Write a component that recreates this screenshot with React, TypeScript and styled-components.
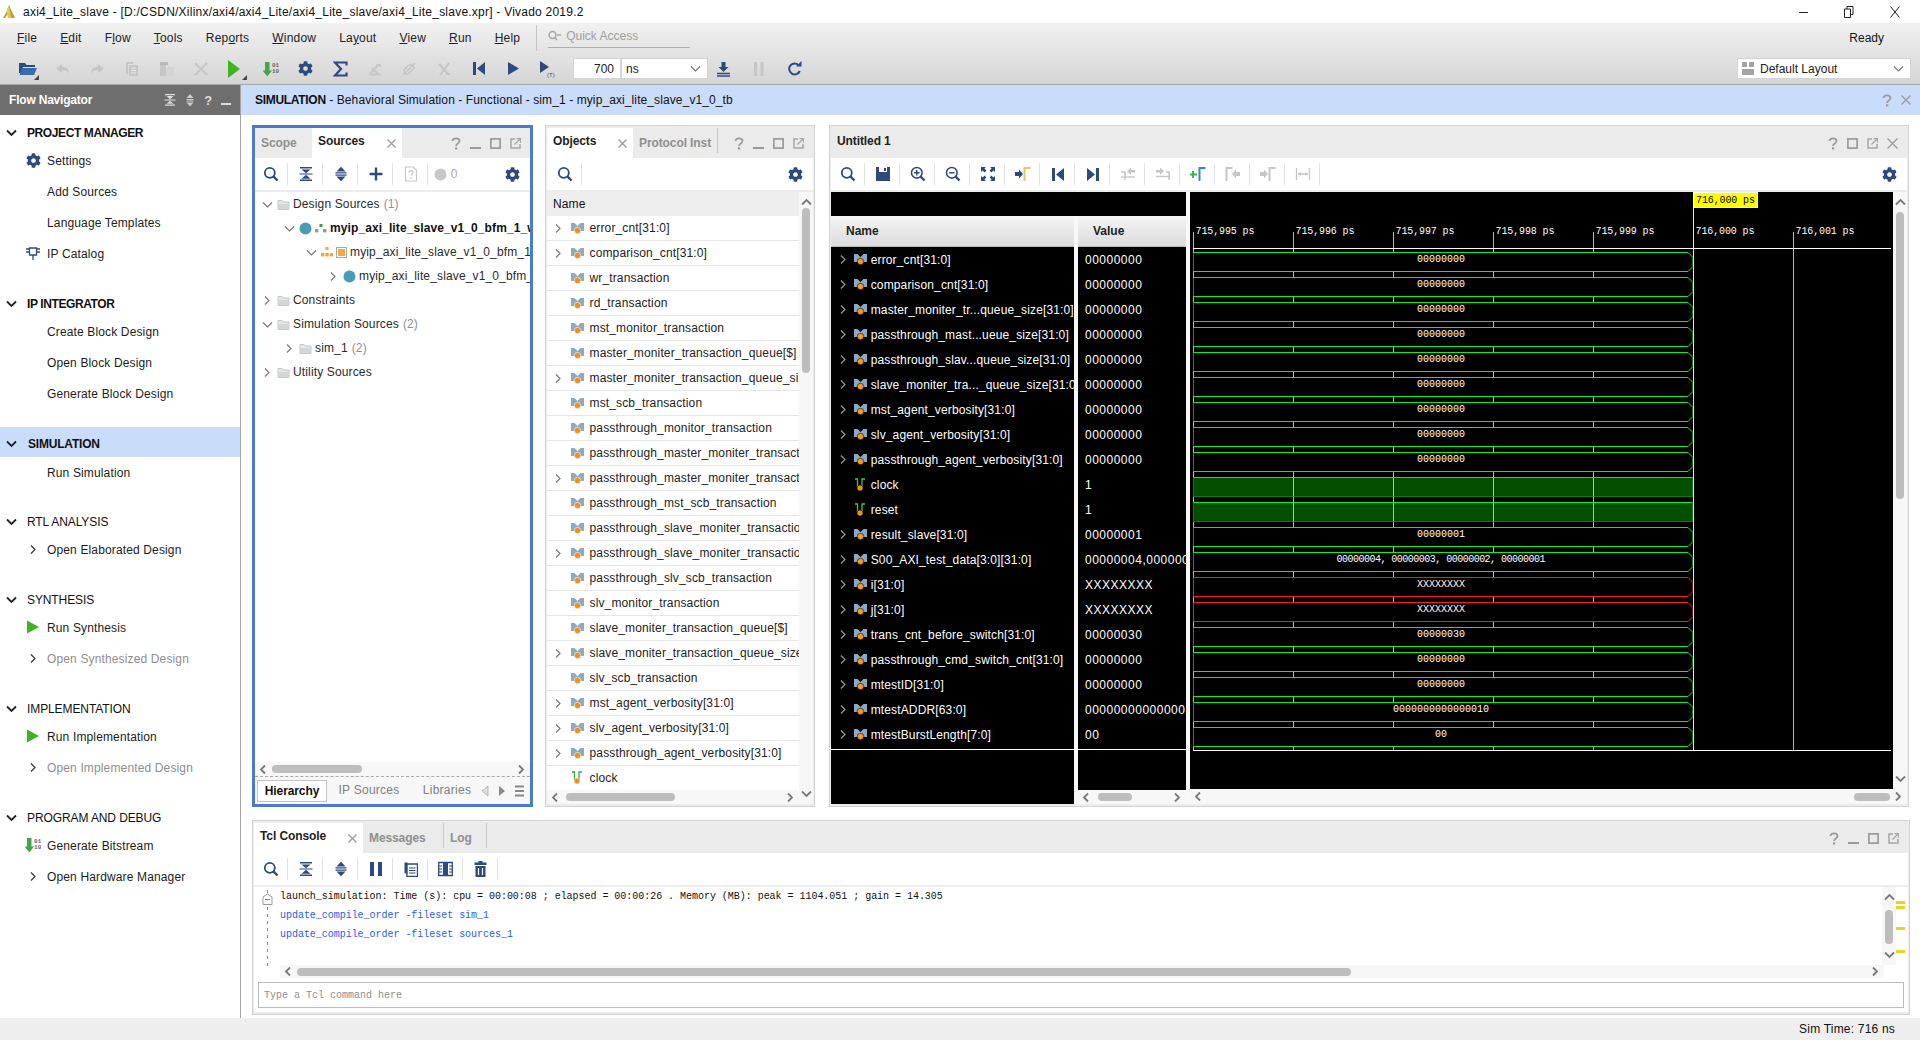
import React from 'react';
import styled, { createGlobalStyle } from 'styled-components';
import { FaCog } from 'react-icons/fa';

const navy = '#2c4a7e';
const dim = '#c6c6c6';
const UI = '"Liberation Sans", Arial, sans-serif';
const MONO = '"Liberation Mono", monospace';

const Global = createGlobalStyle`
  html, body { margin: 0; padding: 0; background: #fff; }
  * { box-sizing: border-box; }
  body { font: 12px ${UI}; color: #111; }
`;

const Page = styled.div`
  width: 1920px;
  height: 1040px;
  display: flex;
  flex-direction: column;
  overflow: hidden;
`;

/* ---------- title + menus ---------- */
const TitleBar = styled.div`
  height: 23px;
  display: flex;
  align-items: center;
  padding-left: 3px;
  gap: 8px;
  background: #fff;
`;
const TitleText = styled.span`
  font-size: 12px;
  letter-spacing: 0.23px;
`;
const WindowButtons = styled.div`
  margin-left: auto;
  display: flex;
  align-items: center;
  gap: 36px;
  padding-right: 20px;
`;
const Chrome = styled.div`
  height: 62px;
  background: linear-gradient(#f1f1f1, #d5d5d5);
  border-bottom: 1px solid #a6a6a6;
`;
const MenuRow = styled.div`
  height: 30px;
  display: flex;
  align-items: center;
  padding-left: 17px;
  gap: 23px;
`;
const MenuItem = styled.span`
  font-size: 12px;
  color: #222;
  letter-spacing: 0.2px;
  u { text-underline-offset: 1px; }
`;
const QuickAccess = styled.div`
  margin-left: -7px;
  height: 26px;
  border-left: 1px solid #c4c4c4;
  padding-left: 11px;
`;
const QuickField = styled.div`
  width: 142px;
  height: 23px;
  border-bottom: 1px solid #aeaeae;
  color: #a0a0a0;
  display: flex;
  gap: 5px;
  align-items: center;
  font-size: 12px;
`;
const ReadyText = styled.span`
  margin-left: auto;
  padding-right: 36px;
`;
const MainTools = styled.div`
  height: 31px;
  display: flex;
  align-items: center;
  padding-left: 10.5px;
`;
const MainSlot = styled.div`
  width: 34.7px;
  display: flex;
  justify-content: center;
  align-items: center;
`;
const TimeInput = styled.input`
  width: 48px;
  height: 21px;
  margin-left: 7.5px;
  border: 1px solid #d4d4d4;
  background: #fff;
  font: 12px ${UI};
  text-align: right;
  padding: 0 6px 0 0;
  color: #222;
  outline: none;
`;
const SelectBox = styled.div<{ $w: number }>`
  width: ${p => p.$w}px;
  height: 21px;
  display: flex;
  align-items: center;
  background: #fff;
  border: 1px solid #d4d4d4;
  padding: 0 6px 0 4px;
  gap: 6px;
  font-size: 12px;
  color: #222;
  svg:last-child { margin-left: auto; }
`;
const TailTools = styled.div`
  display: flex;
  margin-left: 8px;
  gap: 23px;
`;
const LayoutPick = styled.div`
  margin-left: auto;
  padding-right: 9px;
`;

/* ---------- body ---------- */
const Body = styled.div`
  flex: 1;
  display: flex;
  min-height: 0;
`;
const Sidebar = styled.nav`
  width: 241px;
  border-right: 1px solid #a4a4a4;
  display: flex;
  flex-direction: column;
`;
const NavHead = styled.div`
  height: 30px;
  background: #6e6e6e;
  color: #fff;
  font-weight: bold;
  font-size: 12px;
  display: flex;
  align-items: center;
  padding: 0 9px;
  letter-spacing: -0.2px;
`;
const NavHeadTools = styled.div`
  margin-left: auto;
  display: flex;
  align-items: center;
  gap: 9px;
  color: #ddd;
  font-size: 13px;
`;
const NavList = styled.div`
  padding-top: 2px;
  display: flex;
  flex-direction: column;
  gap: 19px;
`;
const NavGroup = styled.div<{ $tight?: boolean }>`
  margin-bottom: ${p => (p.$tight ? -1 : 0)}px;
`;
const Heading = styled.div<{ $active?: boolean; $strong?: boolean }>`
  height: ${p => (p.$active ? 30 : 28)}px;
  margin-top: ${p => (p.$active ? -1 : 0)}px;
  display: flex;
  align-items: center;
  background: ${p => (p.$active ? '#c9ddfb' : 'transparent')};
  font-weight: ${p => (p.$strong || p.$active ? 'bold' : 'normal')};
  letter-spacing: ${p => (p.$strong ? -0.4 : p.$active ? -0.2 : -0.1)}px;
  color: #111;
  padding-left: 6px;
  gap: ${p => (p.$active ? 11 : 10)}px;
  padding-top: 3px;
`;
const NavItem = styled.div<{ $off?: boolean }>`
  height: 31px;
  display: flex;
  align-items: center;
  color: ${p => (p.$off ? '#8e8e8e' : '#1c1c1c')};
  letter-spacing: 0.14px;
  padding-left: 47px;
  position: relative;
`;
const NavMark = styled.span`
  position: absolute;
  left: 24px;
  top: 6px;
  width: 18px;
  height: 18px;
  display: flex;
  align-items: center;
  justify-content: center;
`;
const Main = styled.main`
  flex: 1;
  min-width: 0;
  display: flex;
  flex-direction: column;
`;
const Banner = styled.div`
  height: 30px;
  background: #c9ddfb;
  display: flex;
  align-items: center;
  padding: 0 9px 0 14px;
  font-size: 12px;
  letter-spacing: 0.1px;
  b { letter-spacing: -0.3px; }
`;
const BannerTools = styled.div`
  margin-left: auto;
  display: flex;
  gap: 9px;
  align-items: center;
`;
const Workspace = styled.div`
  display: flex;
  height: 682px;
  margin: 10px 0 13px 11px;
  gap: 12px;
`;
const Panel = styled.section<{ $w?: number; $active?: boolean }>`
  width: ${p => (p.$w ? `${p.$w}px` : 'auto')};
  display: flex;
  flex-direction: column;
  border: ${p => (p.$active ? '3px solid #4a7bcf' : '1px solid #d2d2d2')};
  padding: ${p => (p.$active ? '0' : '2px 1px')};
  background: ${p => (p.$active ? '#fff' : '#ececec')};
  min-height: 0;
`;
const WavePanel = styled(Panel)`
  margin-left: 2px;
`;
const ConsolePanel = styled(Panel)`
  height: 195px;
  margin-left: 11px;
  width: 1658px;
`;

const TabStrip = styled.div`
  height: 30px;
  flex: none;
  display: flex;
  background: #ebebeb;
`;
const Tab = styled.div<{ $w: number; $active?: boolean; $sep?: boolean; $title?: boolean }>`
  width: ${p => p.$w}px;
  display: flex;
  align-items: center;
  padding: 0 6px;
  font-weight: bold;
  white-space: nowrap;
  color: ${p => (p.$active ? '#222' : '#8f8f8f')};
  background: ${p => (p.$active && !p.$title ? '#fff' : 'transparent')};
  border-right: ${p => (p.$sep ? '1px solid #c8c8c8' : '0')};
  margin: ${p => (p.$sep ? '0 0 5px' : '0')};
  letter-spacing: -0.1px;
  padding-top: ${p => (p.$sep ? 5 : 0)}px;
  padding-bottom: ${p => (p.$active ? 5 : 0)}px;
  svg { margin-left: auto; margin-top: 5px; }
`;
const PanelTools = styled.div`
  margin-left: auto;
  display: flex;
  align-items: center;
  padding-right: 7px;
  gap: 5px;
`;
const ControlSlot = styled.span`
  width: 15px;
  height: 15px;
  display: flex;
  align-items: center;
  justify-content: center;
`;
const Toolbar = styled.div<{ $pull?: number }>`
  height: 34px;
  flex: none;
  display: flex;
  background: #fff;
  border-bottom: 2px solid #ececec;
  padding-left: ${p => 2 - (p.$pull ?? 0)}px;
  & > div:first-child { margin-left: -2px; }
`;
const ToolSlot = styled.div<{ $sep?: boolean }>`
  width: 35px;
  height: 32px;
  display: flex;
  align-items: center;
  justify-content: center;
  position: relative;
  &::after {
    content: '';
    display: ${p => (p.$sep === false ? 'none' : 'block')};
    position: absolute;
    right: 0;
    top: 5px;
    height: 22px;
    width: 1px;
    background: #e2e2e2;
  }
`;
const ToolEnd = styled.div`
  margin-left: auto;
  width: 35px;
  display: flex;
  align-items: center;
  justify-content: center;
`;
const Count = styled.span`
  color: #aaa;
  font-size: 12px;
  margin-left: 4px;
`;

/* ---------- scrollbars ---------- */
const HBar = styled.div<{ $h?: number; $inset?: number; $end?: number }>`
  height: ${p => p.$h ?? 14}px;
  flex: none;
  display: flex;
  align-items: center;
  background: #f7f7f7;
  padding: 0 3px;
  margin-left: ${p => p.$inset ?? 0}px;
  margin-right: ${p => p.$end ?? 0}px;
`;
const HTrack = styled.div`
  flex: 1;
  display: flex;
  min-width: 0;
`;
const HThumb = styled.div<{ $from: number; $len: number }>`
  margin-left: ${p => p.$from}px;
  width: ${p => p.$len}px;
  height: 8px;
  border-radius: 4px;
  background: #bdbdbd;
`;
const VBar = styled.div<{ $w?: number }>`
  width: ${p => p.$w ?? 14}px;
  flex: none;
  display: flex;
  flex-direction: column;
  align-items: center;
  background: #f7f7f7;
  padding: 5px 0;
`;
const VTrack = styled.div`
  flex: 1;
  display: flex;
  flex-direction: column;
  align-items: center;
  min-height: 0;
`;
const VThumb = styled.div<{ $from: number; $len: number }>`
  margin-top: ${p => p.$from}px;
  height: ${p => p.$len}px;
  width: 8px;
  border-radius: 4px;
  background: #bdbdbd;
`;

/* ---------- sources ---------- */
const Tree = styled.div`
  flex: 1;
  overflow: hidden;
  min-height: 0;
  background: #fff;
`;
const TreeRow = styled.div<{ $depth: number }>`
  height: 24px;
  display: flex;
  align-items: center;
  padding-left: ${p => 5 + p.$depth * 22}px;
  white-space: nowrap;
  color: #2a2a2a;
  gap: 3px;
  letter-spacing: 0.14px;
`;
const TreeBold = styled.b`
  color: #111;
  letter-spacing: 0.1px;
`;
const Muted = styled.span`
  color: #8f8f8f;
  margin-left: 1px;
`;
const ChevronBox = styled.span`
  width: 14px;
  flex: none;
  display: flex;
  justify-content: center;
`;
const BottomTabs = styled.div`
  height: 28px;
  flex: none;
  border-top: 1px dashed #a8a8a8;
  display: flex;
  align-items: center;
  padding-left: 2px;
  background: #f7f7f7;
  color: #808080;
`;
const BottomTab = styled.div<{ $active?: boolean; $w: number }>`
  width: ${p => p.$w}px;
  height: 22px;
  text-align: center;
  line-height: 20px;
  background: ${p => (p.$active ? '#fff' : 'transparent')};
  border: ${p => (p.$active ? '1px solid #c4c4c4' : '0')};
  font-weight: ${p => (p.$active ? 'bold' : 'normal')};
  color: ${p => (p.$active ? '#111' : '#808080')};
  letter-spacing: ${p => (p.$active ? -0.1 : 0.25)}px;
`;
const BottomArrows = styled.div`
  display: flex;
  align-items: center;
  gap: 9px;
  margin-left: -2px;
`;

/* ---------- objects ---------- */
const ObjectsBody = styled.div`
  flex: 1;
  min-height: 0;
  display: flex;
  background: #fff;
`;
const ObjectsList = styled.div`
  flex: 1;
  min-width: 0;
  display: flex;
  flex-direction: column;
`;
const ObjectsHead = styled.div`
  height: 24px;
  flex: none;
  background: #eeeeee;
  padding: 0 6px;
  display: flex;
  align-items: center;
  letter-spacing: 0.1px;
`;
const ObjectsRows = styled.div`
  flex: 1;
  overflow: hidden;
`;
const ObjectRow = styled.div`
  height: 25px;
  display: flex;
  align-items: center;
  padding-left: 2px;
  border-bottom: 1px solid #e6e6e6;
  white-space: nowrap;
  overflow: hidden;
  letter-spacing: 0.14px;
  color: #222;
`;
const ChevronSlot = styled.span`
  width: 19px;
  flex: none;
  display: flex;
  justify-content: center;
`;
const SignalSlot = styled.span<{ $w: number; $pad: number }>`
  width: ${p => p.$w}px;
  padding-left: ${p => p.$pad}px;
  flex: none;
  display: flex;
  align-items: center;
`;

/* ---------- wave ---------- */
const WaveBody = styled.div`
  flex: 1;
  min-height: 0;
  display: flex;
  gap: 4px;
  background: #f8f8f8;
`;
const SignalBlock = styled.div`
  width: 355px;
  flex: none;
  display: flex;
  flex-direction: column;
`;
const BlackStrip = styled.div`
  height: 24px;
  flex: none;
  background: #000;
`;
const SignalColumns = styled.div`
  flex: 1;
  display: flex;
  gap: 4px;
  min-height: 0;
`;
const SignalColumn = styled.div<{ $w: number }>`
  width: ${p => p.$w}px;
  flex: none;
  display: flex;
  flex-direction: column;
  background: #000;
`;
const ColumnHead = styled.div<{ $pad: number }>`
  height: 31px;
  flex: none;
  background: linear-gradient(#f5f5f5, #dcdcdc);
  border-bottom: 1px solid #bbb;
  display: flex;
  align-items: center;
  padding-left: ${p => p.$pad}px;
  font-weight: bold;
  color: #222;
`;
const SignalRows = styled.div`
  height: 503px;
  flex: none;
  border-bottom: 1px solid #fff;
  overflow: hidden;
`;
const BlackFill = styled.div`
  flex: 1;
  background: #000;
`;
const NameRow = styled.div`
  height: 25px;
  display: flex;
  align-items: center;
  padding-left: 3px;
  color: #fff;
  white-space: nowrap;
  overflow: hidden;
  letter-spacing: 0.14px;
`;
const ValueRow = styled.div`
  height: 25px;
  display: flex;
  align-items: center;
  padding-left: 7px;
  color: #fff;
  white-space: nowrap;
  overflow: hidden;
  letter-spacing: 0.5px;
`;
const WaveArea = styled.div`
  flex: 1;
  min-width: 0;
  display: flex;
  flex-direction: column;
`;
const WaveTop = styled.div`
  height: 597px;
  flex: none;
  display: flex;
`;
const WaveSvg = styled.svg`
  display: block;
  flex: none;
  background: #000;
`;

/* ---------- console ---------- */
const ConsoleBody = styled.div`
  flex: 1;
  min-height: 0;
  display: flex;
  flex-direction: column;
  background: #fff;
`;
const ConsoleTop = styled.div`
  height: 78px;
  flex: none;
  display: flex;
`;
const FoldGutter = styled.div`
  width: 26px;
  flex: none;
  padding-left: 8px;
  padding-top: 3px;
`;
const ConsoleLines = styled.div`
  flex: 1;
  min-width: 0;
  font: 10px ${MONO};
`;
const ConsoleLine = styled.div<{ $cmd?: boolean }>`
  height: 19px;
  line-height: 19px;
  white-space: nowrap;
  color: ${p => (p.$cmd ? '#1f5cf0' : '#111')};
  letter-spacing: -0.03px;
`;
const MarkColumn = styled.div`
  width: 9px;
  flex: none;
  margin-right: 3px;
`;
const Mark = styled.div<{ $top: number }>`
  height: 3px;
  margin-top: ${p => p.$top}px;
  background: #e8d320;
`;
const ConsoleInput = styled.input`
  display: block;
  height: 26px;
  margin: 4px 4px 0 4px;
  width: calc(100% - 8px);
  border: 1px solid #bcbcbc;
  background: #fff;
  font: 10px ${MONO};
  padding: 0 5px;
  outline: none;
  &::placeholder { color: #8e8e8e; opacity: 1; }
`;
const StatusBar = styled.footer`
  height: 22px;
  flex: none;
  background: #eeeeee;
  display: flex;
  align-items: center;
  justify-content: flex-end;
  padding-right: 25px;
  letter-spacing: 0.2px;
`;

/* ---------- icons ---------- */
const S = ({ w = 16, h = 16, children, box }: { w?: number; h?: number; children: React.ReactNode; box?: string }) => (
  <svg width={w} height={h} viewBox={box ?? `0 0 ${w} ${h}`} style={{ flex: 'none', display: 'block' }}>
    {children}
  </svg>
);
const Chevron = ({ dir = 'right', color = '#7a7a7a', bold = false }: { dir?: 'right' | 'down' | 'left' | 'up'; color?: string; bold?: boolean }) => {
  const d = { right: 'M3 1.5 L7 5.5 L3 9.5', left: 'M7 1.5 L3 5.5 L7 9.5', down: 'M1 3.5 L5.5 8 L10 3.5', up: 'M1 7.5 L5.5 3 L10 7.5' }[dir];
  return (
    <S w={11} h={11}>
      <path d={d} fill="none" stroke={color} strokeWidth={bold ? 1.8 : 1.2} />
    </S>
  );
};
const Search = ({ c = navy }: { c?: string }) => (
  <S>
    <circle cx="6.8" cy="6.8" r="5" fill="none" stroke={c} strokeWidth="1.8" />
    <path d="M10.4 10.4 L14.5 14.5" stroke={c} strokeWidth="2.4" />
  </S>
);
const QuickGlass = () => (
  <S w={13} h={12}>
    <circle cx="4.5" cy="5" r="3.4" fill="none" stroke="#a6a6a6" strokeWidth="1.5" />
    <path d="M7 7.5L9 10M9 5h4" stroke="#a6a6a6" strokeWidth="1.5" />
  </S>
);
const CollapseAll = () => (
  <S>
    <path d="M2 1h12v1.4H2z M3.5 3.4h9L8 7.3z M1.5 7.4h13v1.2h-13z M8 8.8l4.5 4h-9z M2 13.6h12V15H2z" fill={navy} />
  </S>
);
const ExpandAll = () => (
  <S>
    <path d="M8 .8l4.5 4.6h-9z M2.5 6.2h11v1.2h-11z M2.5 8.6h11v1.2h-11z M3.5 10.6h9L8 15.2z" fill={navy} />
  </S>
);
const Plus = () => (
  <S>
    <path d="M6.8 1.5h2.4v5.3h5.3v2.4H9.2v5.3H6.8V9.2H1.5V6.8h5.3z" fill={navy} />
  </S>
);
const Gear = () => <FaCog size={15} color={navy} />;
const DocHelp = () => (
  <S>
    <path d="M2.5 1h8l3 3v11h-11z" fill="none" stroke={dim} strokeWidth="1.2" />
    <path d="M6 6.5c0-2.5 4-2.5 4 0 0 1.5-2 1.5-2 3.2M8 11v1.4" fill="none" stroke={dim} strokeWidth="1.2" />
  </S>
);
const Help = () => (
  <S w={10} h={13}>
    <path d="M1.5 4c0-3.6 7-3.6 7 0 0 2.4-3.4 2.4-3.4 5" fill="none" stroke="#9a9a9a" strokeWidth="1.8" />
    <rect x="4" y="10.3" width="2.2" height="2.2" fill="#9a9a9a" />
  </S>
);
const Minimize = () => (
  <S w={11} h={13}>
    <rect x="0" y="10" width="11" height="2" fill="#9a9a9a" />
  </S>
);
const Maximize = () => (
  <S w={11} h={11}>
    <rect x=".9" y=".9" width="9.2" height="9.2" fill="none" stroke="#9a9a9a" strokeWidth="1.7" />
  </S>
);
const Float = () => (
  <S w={11} h={11}>
    <path d="M5 1H1v9h9V6" fill="none" stroke="#a6a6a6" strokeWidth="1.5" />
    <path d="M4.5 6.5 L10.5 .5 M6.5 .7h4v4" fill="none" stroke="#a6a6a6" strokeWidth="1.3" />
  </S>
);
const CloseX = ({ c = '#9a9a9a', s = 9 }: { c?: string; s?: number }) => (
  <S w={s} h={s}>
    <path d={`M.5 .5L${s - 0.5} ${s - 0.5}M${s - 0.5} .5L.5 ${s - 0.5}`} stroke={c} strokeWidth="1.3" />
  </S>
);
const FolderGray = () => (
  <S w={13} h={13}>
    <path d="M1 2.5h4l1 1.5h6v7.5H1z" fill="#e4e6e8" stroke="#c4c7ca" strokeWidth="1" />
    <path d="M1.5 6h10.5v5H1.5z" fill="#d4d7da" />
  </S>
);
const Dot = ({ c = '#4a9bb8' }: { c?: string }) => (
  <S w={13} h={13}>
    <circle cx="6.5" cy="6.5" r="6" fill={c} />
  </S>
);
const Hier = ({ warm = false }: { warm?: boolean }) => (
  <S w={12} h={12}>
    <rect x="4.5" y={warm ? 1 : 2} width="3" height="3" fill={warm ? '#f2a63c' : '#3ba043'} />
    <rect x="0" y="7" width="3.4" height="3.4" fill={warm ? '#f2a63c' : '#9a9a9a'} />
    <rect x={warm ? 4.4 : 8} y="7" width="3.4" height="3.4" fill={warm ? '#f2a63c' : '#9a9a9a'} />
    {warm && <rect x="8.8" y="7" width="3.2" height="3.4" fill="#f2a63c" />}
  </S>
);
const OrangeBox = () => (
  <S w={11} h={11}>
    <rect x=".5" y=".5" width="10" height="10" fill="#fff" stroke="#aaa" />
    <rect x="2" y="2" width="7" height="7" fill="#f6a83e" />
  </S>
);
const Signal = ({ dark = false }: { dark?: boolean }) => (
  <S w={13} h={13}>
    <path d="M0 1h3.5L6.5 4l3-3H13v8H0z" fill={dark ? '#8aa9c4' : '#8fa9bf'} />
    <circle cx="6.5" cy="8.5" r="3.2" fill={dark ? '#f79a22' : '#ef8f1e'} stroke={dark ? '#000' : '#fff'} strokeWidth=".6" />
  </S>
);
const ClockSignal = ({ dark = false }: { dark?: boolean }) => (
  <S w={13} h={14}>
    <path d="M1 1h2.5v8M8 9V1h3" fill="none" stroke={dark ? '#4bc24b' : '#3aa34a'} strokeWidth="1.3" />
    <circle cx="6" cy="10" r="3" fill="#ef8f1e" stroke={dark ? '#000' : '#fff'} strokeWidth=".5" />
  </S>
);
const RunTriangle = ({ s = 12 }: { s?: number }) => (
  <S w={s} h={s + 2} box="0 0 12 14">
    <path d="M0 .5 L12 7 L0 13.5z" fill="#3fb41f" />
  </S>
);
const BitStream = () => (
  <S w={16} h={16}>
    <path d="M2 1h4.5v8.5H9l-4.7 6-4.6-6H2z" fill="#3fa64a" />
    <text x="9" y="6.4" fontFamily={MONO} fontSize="6" fontWeight="bold" fill="#666">01</text>
    <text x="9" y="12.4" fontFamily={MONO} fontSize="6" fontWeight="bold" fill="#666">10</text>
  </S>
);
const Corner = () => (
  <path d="M22 22h-5l5-5z" fill="#444" />
);
const FolderOpen = () => (
  <S w={22} h={22}>
    <path d="M2 5h6l1.5 2H18v2H6l-2 6H2z" fill={navy} />
    <path d="M5 10h15l-3 7H2.5z" fill="#3a6bb0" />
    <Corner />
  </S>
);
const UndoIcon = ({ flip = false }: { flip?: boolean }) => (
  <S w={16} h={12}>
    <g transform={flip ? 'translate(16 0) scale(-1 1)' : undefined}>
      <path d="M7 1 L1 5.5 L7 10 V7.2 C10 7 12.5 8 14.5 10.5 C14 6 11 3.8 7 3.8z" fill={dim} />
    </g>
  </S>
);
const CopyIcon = () => (
  <S w={14} h={16}>
    <path d="M1 1h7v2H3v10H1z" fill={dim} />
    <path d="M4 4h9v11H4z" fill={dim} />
    <path d="M6 7h5M6 9.5h5M6 12h5" stroke="#eaeaea" />
  </S>
);
const PasteIcon = () => (
  <S w={16} h={16}>
    <path d="M1 1h8v3H1z" fill="#b8b8b8" />
    <path d="M1 4h6v11H1z" fill={dim} />
    <path d="M7.5 6H15v9H7.5z" fill="#d4d4d4" />
  </S>
);
const BigX = () => (
  <S w={14} h={14}>
    <path d="M1 1L13 13M13 1L1 13" stroke={dim} strokeWidth="2" />
  </S>
);
const RunMain = () => (
  <S w={22} h={22}>
    <path d="M3 2 L15 11 L3 20z" fill="#3fb41f" />
    <Corner />
  </S>
);
const Sigma = () => (
  <S w={15} h={16}>
    <path d="M13.5 4.5V1.5H2l6 6.5-6 6.5h11.5v-3" fill="none" stroke={navy} strokeWidth="2.2" />
  </S>
);
const CheckOff = () => (
  <S>
    <path d="M2 13.5h12M3 13L12 3M5 7l6 6M9 4h4v2" fill="none" stroke={dim} strokeWidth="2" />
  </S>
);
const SlashOff = () => (
  <S>
    <path d="M2 14L14 2M3 9l5-5 4 0 1 3-6 6H4z" fill="none" stroke={dim} strokeWidth="1.5" />
  </S>
);
const CrossOff = () => (
  <S>
    <path d="M3 3l9 10M13 2L4 14M10 13h4" fill="none" stroke={dim} strokeWidth="2" />
  </S>
);
const SkipStart = () => (
  <S w={14} h={15}>
    <path d="M1 1h3v13H1z M13 1v13L5 7.5z" fill={navy} />
  </S>
);
const SkipEnd = () => (
  <S w={14} h={15}>
    <path d="M10 1h3v13h-3z M1 1v13l8-6.5z" fill={navy} />
  </S>
);
const Play = () => (
  <S w={13} h={15}>
    <path d="M1 1 L12 7.5 L1 14z" fill={navy} />
  </S>
);
const PlayT = () => (
  <S w={18} h={18}>
    <path d="M1 1 L10 7 L1 13z" fill={navy} />
    <text x="8" y="17" fontFamily={UI} fontSize="6" fill={navy}>(T)</text>
  </S>
);
const StepDown = () => (
  <S w={15} h={16}>
    <path d="M5.5 1h4v5h3L7.5 11 2.5 6h3z" fill={navy} />
    <path d="M1 12.5h13M1 15h13" stroke={navy} strokeWidth="1.3" />
  </S>
);
const PauseOff = () => (
  <S w={10} h={16}>
    <path d="M0 1h3.2v14H0z M6.4 1h3.2v14H6.4z" fill={dim} />
  </S>
);
const Reload = () => (
  <S w={15} h={15}>
    <path d="M12 4.5A5.5 5.5 0 1 0 12.8 10" fill="none" stroke={navy} strokeWidth="2" />
    <path d="M9 5.5h5.5V0z" fill={navy} />
  </S>
);
const LayoutIcon = () => (
  <S w={12} h={13}>
    <path d="M0 0h5v5H0z M7 0h5v5H7z M0 7h12v6H0z" fill="#a4a4a4" />
  </S>
);
const Save = () => (
  <S>
    <path d="M1 1h14v14H1z" fill={navy} />
    <path d="M4 1h8v5H4z" fill="#fff" />
    <path d="M9 2h2v3H9z" fill={navy} />
  </S>
);
const ZoomIcon = ({ plus }: { plus?: boolean }) => (
  <S>
    <circle cx="6.8" cy="6.8" r="5.3" fill="none" stroke={navy} strokeWidth="1.6" />
    <path d="M10.5 10.5 L14.5 14.5" stroke={navy} strokeWidth="2.4" />
    <path d={plus ? 'M4 6.8h5.6M6.8 4v5.6' : 'M4 6.8h5.6'} stroke={navy} strokeWidth="1.4" />
  </S>
);
const Fit = () => (
  <S>
    <path d="M1 1h5L4.4 2.6l2 2-1.8 1.8-2-2L1 6z M15 1h-5l1.6 1.6-2 2 1.8 1.8 2-2L15 6z M1 15h5l-1.6-1.6 2-2-1.8-1.8-2 2L1 10z M15 15h-5l1.6-1.6-2-2 1.8-1.8 2 2L15 10z" fill={navy} />
  </S>
);
const CursorTo = ({ c = navy, bracket = '#e2c66a' }: { c?: string; bracket?: string }) => (
  <S w={16} h={14}>
    <path d="M0 5h4V2.5L8 7l-4 4.5V9H0z" fill={c} />
    <path d="M9.5 14V1h6" fill="none" stroke={bracket} strokeWidth="2" />
  </S>
);
const LeftBracket = () => (
  <S w={16} h={14}>
    <path d="M1.5 14V1h6" fill="none" stroke={dim} strokeWidth="2" />
    <path d="M15 5h-4V2.5L7 7l4 4.5V9h4z" fill={dim} />
  </S>
);
const ShiftA = () => (
  <S w={16} h={14}>
    <path d="M1 5h4v8" fill="none" stroke={dim} strokeWidth="1.6" />
    <path d="M1 10h14" stroke={dim} strokeWidth="1.4" />
    <path d="M15 3h-4V.5L7 4l4 4V5.5h4z" fill={dim} />
  </S>
);
const ShiftB = () => (
  <S w={16} h={14}>
    <path d="M1 9.5h14" stroke={dim} strokeWidth="1.4" />
    <path d="M14 13V5h-3" fill="none" stroke={dim} strokeWidth="1.6" />
    <path d="M1 3h4V.5L9 4 5 8V5.5H1z" fill={dim} />
  </S>
);
const AddMarker = () => (
  <S w={16} h={14}>
    <path d="M3 4v7M0 7.5h7" stroke="#39b54a" strokeWidth="2" />
    <path d="M9.5 14V1h6" fill="none" stroke="#2f8fa8" strokeWidth="2" />
  </S>
);
const Span = () => (
  <S w={16} h={14}>
    <path d="M1.5 1v12M14.5 1v12M3 7h10" stroke={dim} strokeWidth="1.3" fill="none" />
    <path d="M3 7l3-2v4z M13 7l-3-2v4z" fill={dim} />
  </S>
);
const PauseNavy = () => (
  <S w={12} h={16}>
    <path d="M0 1h4v14H0z M8 1h4v14H8z" fill={navy} />
  </S>
);
const DocIcon = () => (
  <S w={14} h={16}>
    <path d="M.5 1.5h3v1.5H3v9.5H.5z" fill={navy} />
    <path d="M3 3h10.5v12.5H3z" fill="#fff" stroke={navy} strokeWidth="1.4" />
    <path d="M5 7h6.5M5 9.5h6.5M5 12h6.5" stroke={navy} strokeWidth="1.1" />
  </S>
);
const ColumnsIcon = () => (
  <S w={15} h={16}>
    <path d="M.7 1.5h13.6v13H.7z" fill="#fff" stroke={navy} strokeWidth="1.3" />
    <path d="M5 1.5h5v13H5z" fill={navy} />
    <path d="M1 5h3M1 8h3M1 11h3M11 5h3M11 8h3M11 11h3" stroke={navy} strokeWidth="1" />
  </S>
);
const Trash = () => (
  <S w={13} h={16}>
    <path d="M4.5 0h4v1.5h4V4H.5V1.5h4z M1.5 5h10v11h-10z" fill={navy} />
    <path d="M4.5 7v7M8.5 7v7" stroke="#fff" strokeWidth="1.2" />
  </S>
);
const FoldMark = () => (
  <S w={12} h={80}>
    <path d="M5.5 0v3M5.5 17v60" stroke="#888" strokeDasharray="3 4" />
    <path d="M1 7l4.5-3L10 7v7.5H1z" fill="#fff" stroke="#999" />
    <path d="M3 9.5h5" stroke="#777" />
  </S>
);
const Logo = () => (
  <S w={12} h={14}>
    <path d="M6 0 L12 13 H7 L5 9 L2 13 H0 L3.5 7z" fill="#b8a23a" />
    <path d="M6 0 L8 13 H5 L3.5 7z" fill="#e7c94a" />
  </S>
);
const WinRestore = () => (
  <S w={10} h={12}>
    <path d="M.5 3h6v8.5h-6z M3 3V.5h6v8H6.5" fill="none" stroke="#222" />
  </S>
);
const WinClose = () => (
  <S w={10} h={12}>
    <path d="M.5 .5L9.5 11.5M9.5 .5L.5 11.5" stroke="#222" />
  </S>
);
const WinMin = () => (
  <S w={9} h={12}>
    <path d="M0 6.5h9" stroke="#222" />
  </S>
);
const TriLeft = () => (
  <S w={8} h={12}>
    <path d="M7 1L1 6l6 5z" fill="#ddd" stroke="#999" strokeWidth=".6" />
  </S>
);
const TriRight = () => (
  <S w={8} h={12}>
    <path d="M1 1l6 5-6 5z" fill="#888" />
  </S>
);
const Burger = () => (
  <S w={9} h={12}>
    <path d="M0 1.5h9M0 6h9M0 10.5h9" stroke="#888" strokeWidth="1.8" />
  </S>
);
const CollapseWhite = () => (
  <S w={12} h={14}>
    <path d="M1 1h10v1.2H1z M2.5 3h7L6 6.3z M.5 6.5h11v1h-11z M6 7.7l3.5 3h-7z M1 11.5h10v1.2H1z" fill="#ddd" />
  </S>
);
const ExpandWhite = () => (
  <S w={10} h={14}>
    <path d="M5 1l3.5 4h-7z M1.5 6h7v.9h-7z M1.5 7.6h7v.9h-7z M1.5 9.5h7L5 13.5z" fill="#ccc" />
  </S>
);
const WhiteDash = () => (
  <S w={10} h={12}>
    <rect y="9" width="10" height="2" fill="#ddd" />
  </S>
);

/* ---------- data ---------- */
const menus: React.ReactNode[] = [
  <><u>F</u>ile</>,
  <><u>E</u>dit</>,
  <>F<u>l</u>ow</>,
  <><u>T</u>ools</>,
  <>Rep<u>o</u>rts</>,
  <><u>W</u>indow</>,
  <>La<u>y</u>out</>,
  <><u>V</u>iew</>,
  <><u>R</u>un</>,
  <><u>H</u>elp</>,
];

type NavEntry = { label: string; icon?: React.ReactNode; arrow?: boolean; off?: boolean };
type NavSection = { title: string; strong?: boolean; active?: boolean; items: NavEntry[] };
const nav: NavSection[] = [
  {
    title: 'PROJECT MANAGER',
    strong: true,
    items: [
      { label: 'Settings', icon: <Gear /> },
      { label: 'Add Sources' },
      { label: 'Language Templates' },
      {
        label: 'IP Catalog',
        icon: (
          <S w={14} h={15}>
            <path d="M3.5 2h7v7h-7z M0 3h3.5M0 6h3.5M10.5 3H14M10.5 6H14M7 9v5" fill="none" stroke={navy} strokeWidth="1.3" />
          </S>
        ),
      },
    ],
  },
  {
    title: 'IP INTEGRATOR',
    strong: true,
    items: [{ label: 'Create Block Design' }, { label: 'Open Block Design' }, { label: 'Generate Block Design' }],
  },
  { title: 'SIMULATION', active: true, items: [{ label: 'Run Simulation' }] },
  { title: 'RTL ANALYSIS', items: [{ label: 'Open Elaborated Design', arrow: true }] },
  {
    title: 'SYNTHESIS',
    items: [
      { label: 'Run Synthesis', icon: <RunTriangle /> },
      { label: 'Open Synthesized Design', arrow: true, off: true },
    ],
  },
  {
    title: 'IMPLEMENTATION',
    items: [
      { label: 'Run Implementation', icon: <RunTriangle /> },
      { label: 'Open Implemented Design', arrow: true, off: true },
    ],
  },
  {
    title: 'PROGRAM AND DEBUG',
    items: [
      { label: 'Generate Bitstream', icon: <BitStream /> },
      { label: 'Open Hardware Manager', arrow: true },
    ],
  },
];

const objects: [string, boolean][] = [
  ['error_cnt[31:0]', true],
  ['comparison_cnt[31:0]', true],
  ['wr_transaction', false],
  ['rd_transaction', false],
  ['mst_monitor_transaction', false],
  ['master_moniter_transaction_queue[$]', false],
  ['master_moniter_transaction_queue_size[31:0]', true],
  ['mst_scb_transaction', false],
  ['passthrough_monitor_transaction', false],
  ['passthrough_master_moniter_transaction', false],
  ['passthrough_master_moniter_transaction_queue', true],
  ['passthrough_mst_scb_transaction', false],
  ['passthrough_slave_moniter_transaction', false],
  ['passthrough_slave_moniter_transaction_queue', true],
  ['passthrough_slv_scb_transaction', false],
  ['slv_monitor_transaction', false],
  ['slave_moniter_transaction_queue[$]', false],
  ['slave_moniter_transaction_queue_size[31:0]', true],
  ['slv_scb_transaction', false],
  ['mst_agent_verbosity[31:0]', true],
  ['slv_agent_verbosity[31:0]', true],
  ['passthrough_agent_verbosity[31:0]', true],
];

type Wave = { name: string; value: string; label?: string; kind?: 'bus' | 'bit' | 'x' };
const waves: Wave[] = [
  { name: 'error_cnt[31:0]', value: '00000000' },
  { name: 'comparison_cnt[31:0]', value: '00000000' },
  { name: 'master_moniter_tr...queue_size[31:0]', value: '00000000' },
  { name: 'passthrough_mast...ueue_size[31:0]', value: '00000000' },
  { name: 'passthrough_slav...queue_size[31:0]', value: '00000000' },
  { name: 'slave_moniter_tra..._queue_size[31:0]', value: '00000000' },
  { name: 'mst_agent_verbosity[31:0]', value: '00000000' },
  { name: 'slv_agent_verbosity[31:0]', value: '00000000' },
  { name: 'passthrough_agent_verbosity[31:0]', value: '00000000' },
  { name: 'clock', value: '1', kind: 'bit' },
  { name: 'reset', value: '1', kind: 'bit' },
  { name: 'result_slave[31:0]', value: '00000001' },
  { name: 'S00_AXI_test_data[3:0][31:0]', value: '00000004,00000003,00000002,00000001', label: '00000004, 00000003, 00000002, 00000001' },
  { name: 'i[31:0]', value: 'XXXXXXXX', kind: 'x' },
  { name: 'j[31:0]', value: 'XXXXXXXX', kind: 'x' },
  { name: 'trans_cnt_before_switch[31:0]', value: '00000030' },
  { name: 'passthrough_cmd_switch_cnt[31:0]', value: '00000000' },
  { name: 'mtestID[31:0]', value: '00000000' },
  { name: 'mtestADDR[63:0]', value: '0000000000000010' },
  { name: 'mtestBurstLength[7:0]', value: '00' },
];

const ticks = [
  { x: 3.5, t: '715,995 ps' },
  { x: 103.5, t: '715,996 ps' },
  { x: 203.5, t: '715,997 ps' },
  { x: 303.5, t: '715,998 ps' },
  { x: 403.5, t: '715,999 ps' },
  { x: 503.5, t: '716,000 ps' },
  { x: 603.5, t: '716,001 ps' },
];

/* ---------- pieces ---------- */
const PanelControls = ({ min = true, close = false }: { min?: boolean; close?: boolean }) => (
  <PanelTools>
    <ControlSlot><Help /></ControlSlot>
    {min && <ControlSlot><Minimize /></ControlSlot>}
    <ControlSlot><Maximize /></ControlSlot>
    <ControlSlot><Float /></ControlSlot>
    {close && <ControlSlot><CloseX s={11} /></ControlSlot>}
  </PanelTools>
);

const Horizontal = ({ from, len, h, inset, end }: { from: number; len: number; h?: number; inset?: number; end?: number }) => (
  <HBar $h={h} $inset={inset} $end={end}>
    <Chevron dir="left" bold />
    <HTrack><HThumb $from={from} $len={len} /></HTrack>
    <Chevron dir="right" bold />
  </HBar>
);

const Vertical = ({ from, len }: { from: number; len: number }) => (
  <VBar>
    <Chevron dir="up" bold />
    <VTrack><VThumb $from={from} $len={len} /></VTrack>
    <Chevron dir="down" bold />
  </VBar>
);

const Waveform = () => {
  const bottom = 558;
  return (
    <WaveSvg width={703} height={597}>
      {ticks.slice(0, 5).map(t => (
        <line key={t.t} x1={t.x} x2={t.x} y1={40} y2={bottom} stroke="#b8b8b8" />
      ))}
      <line x1={603.5} x2={603.5} y1={40} y2={bottom} stroke="#b8b8b8" />
      <line x1={3} x2={701} y1={56.5} y2={56.5} stroke="#fff" />
      <line x1={3} x2={701} y1={558.5} y2={558.5} stroke="#fff" />
      {ticks.map(t => (
        <text key={t.t} x={t.x + 2} y={42} fontFamily={MONO} fontSize={10} fill="#fff" textLength={59}>{t.t}</text>
      ))}
      {waves.map((w, i) => {
        const top = 60.5 + 25 * i;
        const bot = top + 19;
        const color = w.kind === 'x' ? '#ff1a1a' : '#10f010';
        if (w.kind === 'bit') {
          return (
            <g key={w.name}>
              <rect x={3.5} y={top} width={499} height={19} fill="#024f00" stroke="#0d7a0d" />
              <line x1={3.5} x2={502.5} y1={top} y2={top} stroke="#10f010" />
              {ticks.slice(1, 5).map(t => (
                <line key={t.t} x1={t.x} x2={t.x} y1={top} y2={bot} stroke="#a8c8a8" />
              ))}
            </g>
          );
        }
        return (
          <g key={w.name}>
            <path d={`M3.5 ${top} H498 L503 ${top + 5} V${bot - 5} L498 ${bot} H3.5`} fill="#000" stroke={color} />
            <text
              x={251}
              y={top + 9.5}
              textAnchor="middle"
              fontFamily={MONO}
              fontSize={10}
              fill="#fff"
              textLength={w.label ? 209 : undefined}
            >
              {w.label ?? w.value}
            </text>
          </g>
        );
      })}
      <line x1={503.5} x2={503.5} y1={15} y2={bottom} stroke="#ffff00" />
      <rect x={503.5} y={0.5} width={64} height={15} fill="#ffff00" stroke="#fff" />
      <text x={506} y={11} fontFamily={MONO} fontSize={10} fill="#000" textLength={59}>716,000 ps</text>
    </WaveSvg>
  );
};

export default function App() {
  return (
    <Page>
      <Global />
      <TitleBar>
        <Logo />
        <TitleText>axi4_Lite_slave - [D:/CSDN/Xilinx/axi4/axi4_Lite/axi4_Lite_slave/axi4_Lite_slave.xpr] - Vivado 2019.2</TitleText>
        <WindowButtons>
          <WinMin />
          <WinRestore />
          <WinClose />
        </WindowButtons>
      </TitleBar>

      <Chrome>
        <MenuRow>
          {menus.map((m, i) => (
            <MenuItem key={i}>{m}</MenuItem>
          ))}
          <QuickAccess>
            <QuickField><QuickGlass />Quick Access</QuickField>
          </QuickAccess>
          <ReadyText>Ready</ReadyText>
        </MenuRow>
        <MainTools>
          <MainSlot><FolderOpen /></MainSlot>
          <MainSlot><UndoIcon /></MainSlot>
          <MainSlot><UndoIcon flip /></MainSlot>
          <MainSlot><CopyIcon /></MainSlot>
          <MainSlot><PasteIcon /></MainSlot>
          <MainSlot><BigX /></MainSlot>
          <MainSlot><RunMain /></MainSlot>
          <MainSlot><BitStream /></MainSlot>
          <MainSlot><Gear /></MainSlot>
          <MainSlot><Sigma /></MainSlot>
          <MainSlot><CheckOff /></MainSlot>
          <MainSlot><SlashOff /></MainSlot>
          <MainSlot><CrossOff /></MainSlot>
          <MainSlot><SkipStart /></MainSlot>
          <MainSlot><Play /></MainSlot>
          <MainSlot><PlayT /></MainSlot>
          <TimeInput defaultValue="700" />
          <SelectBox $w={87}>ns<Chevron dir="down" /></SelectBox>
          <TailTools>
            <StepDown />
            <PauseOff />
            <Reload />
          </TailTools>
          <LayoutPick>
            <SelectBox $w={174}><LayoutIcon />Default Layout<Chevron dir="down" /></SelectBox>
          </LayoutPick>
        </MainTools>
      </Chrome>

      <Body>
        <Sidebar>
          <NavHead>
            Flow Navigator
            <NavHeadTools>
              <CollapseWhite />
              <ExpandWhite />
              <b>?</b>
              <WhiteDash />
            </NavHeadTools>
          </NavHead>
          <NavList>
            {nav.map(s => (
              <NavGroup key={s.title} $tight={s.active}>
                <Heading $active={s.active} $strong={s.strong}>
                  <Chevron dir="down" color="#222" bold />
                  {s.title}
                </Heading>
                {s.items.map(it => (
                  <NavItem key={it.label} $off={it.off}>
                    {it.icon && <NavMark>{it.icon}</NavMark>}
                    {it.arrow && <NavMark><Chevron color="#333" /></NavMark>}
                    {it.label}
                  </NavItem>
                ))}
              </NavGroup>
            ))}
          </NavList>
        </Sidebar>

        <Main>
          <Banner>
            <span><b>SIMULATION</b> - Behavioral Simulation - Functional - sim_1 - myip_axi_lite_slave_v1_0_tb</span>
            <BannerTools>
              <Help />
              <CloseX s={10} />
            </BannerTools>
          </Banner>

          <Workspace>
            <Panel $w={281} $active>
              <TabStrip>
                <Tab $w={57}>Scope</Tab>
                <Tab $w={90} $active>Sources<CloseX /></Tab>
                <PanelControls />
              </TabStrip>
              <Toolbar $pull={2}>
                <ToolSlot><Search /></ToolSlot>
                <ToolSlot><CollapseAll /></ToolSlot>
                <ToolSlot><ExpandAll /></ToolSlot>
                <ToolSlot><Plus /></ToolSlot>
                <ToolSlot><DocHelp /></ToolSlot>
                <ToolSlot $sep={false}><Dot c="#c8c8c8" /><Count>0</Count></ToolSlot>
                <ToolEnd><Gear /></ToolEnd>
              </Toolbar>
              <Tree>
                <TreeRow $depth={0}><ChevronBox><Chevron dir="down" /></ChevronBox><FolderGray />Design Sources <Muted>(1)</Muted></TreeRow>
                <TreeRow $depth={1}><ChevronBox><Chevron dir="down" /></ChevronBox><Dot /><Hier /><TreeBold>myip_axi_lite_slave_v1_0_bfm_1_wrapper</TreeBold></TreeRow>
                <TreeRow $depth={2}><ChevronBox><Chevron dir="down" /></ChevronBox><Hier warm /><OrangeBox />myip_axi_lite_slave_v1_0_bfm_1_i</TreeRow>
                <TreeRow $depth={3}><ChevronBox><Chevron /></ChevronBox><Dot />myip_axi_lite_slave_v1_0_bfm_1</TreeRow>
                <TreeRow $depth={0}><ChevronBox><Chevron /></ChevronBox><FolderGray />Constraints</TreeRow>
                <TreeRow $depth={0}><ChevronBox><Chevron dir="down" /></ChevronBox><FolderGray />Simulation Sources <Muted>(2)</Muted></TreeRow>
                <TreeRow $depth={1}><ChevronBox><Chevron /></ChevronBox><FolderGray />sim_1 <Muted>(2)</Muted></TreeRow>
                <TreeRow $depth={0}><ChevronBox><Chevron /></ChevronBox><FolderGray />Utility Sources</TreeRow>
              </Tree>
              <Horizontal from={3} len={90} />
              <BottomTabs>
                <BottomTab $w={70} $active>Hierarchy</BottomTab>
                <BottomTab $w={84}>IP Sources</BottomTab>
                <BottomTab $w={72}>Libraries</BottomTab>
                <BottomArrows>
                  <TriLeft />
                  <TriRight />
                  <Burger />
                </BottomArrows>
              </BottomTabs>
            </Panel>

            <Panel $w={270}>
              <TabStrip>
                <Tab $w={86} $active>Objects<CloseX /></Tab>
                <Tab $w={85} $sep>Protocol Inst</Tab>
                <PanelControls />
              </TabStrip>
              <Toolbar>
                <ToolSlot><Search /></ToolSlot>
                <ToolEnd><Gear /></ToolEnd>
              </Toolbar>
              <ObjectsBody>
                <ObjectsList>
                  <ObjectsHead>Name</ObjectsHead>
                  <ObjectsRows>
                    {objects.map(([n, more]) => (
                      <ObjectRow key={n}>
                        <ChevronSlot>{more && <Chevron />}</ChevronSlot>
                        <SignalSlot $w={21.5} $pad={2.5}><Signal /></SignalSlot>
                        {n}
                      </ObjectRow>
                    ))}
                    <ObjectRow>
                      <ChevronSlot />
                      <SignalSlot $w={21.5} $pad={2.5}><ClockSignal /></SignalSlot>
                      clock
                    </ObjectRow>
                  </ObjectsRows>
                  <Horizontal from={5} len={109} />
                </ObjectsList>
                <Vertical from={0} len={165} />
              </ObjectsBody>
            </Panel>

            <WavePanel $w={1080}>
              <TabStrip>
                <Tab $w={120} $title $active>Untitled 1</Tab>
                <PanelControls min={false} close />
              </TabStrip>
              <Toolbar $pull={1}>
                <ToolSlot><Search /></ToolSlot>
                <ToolSlot><Save /></ToolSlot>
                <ToolSlot><ZoomIcon plus /></ToolSlot>
                <ToolSlot><ZoomIcon /></ToolSlot>
                <ToolSlot><Fit /></ToolSlot>
                <ToolSlot><CursorTo /></ToolSlot>
                <ToolSlot><SkipStart /></ToolSlot>
                <ToolSlot><SkipEnd /></ToolSlot>
                <ToolSlot><ShiftA /></ToolSlot>
                <ToolSlot><ShiftB /></ToolSlot>
                <ToolSlot><AddMarker /></ToolSlot>
                <ToolSlot><LeftBracket /></ToolSlot>
                <ToolSlot><CursorTo c={dim} bracket={dim} /></ToolSlot>
                <ToolSlot><Span /></ToolSlot>
                <ToolEnd><Gear /></ToolEnd>
              </Toolbar>
              <WaveBody>
                <SignalBlock>
                  <BlackStrip />
                  <SignalColumns>
                    <SignalColumn $w={243}>
                      <ColumnHead $pad={15}>Name</ColumnHead>
                      <SignalRows>
                        {waves.map(w => (
                          <NameRow key={w.name}>
                            <ChevronSlot>{w.kind !== 'bit' && <Chevron color="#9a9a9a" />}</ChevronSlot>
                            <SignalSlot $w={17.7} $pad={0.5}>
                              {w.kind === 'bit' ? <ClockSignal dark /> : <Signal dark />}
                            </SignalSlot>
                            {w.name}
                          </NameRow>
                        ))}
                      </SignalRows>
                      <BlackFill />
                    </SignalColumn>
                    <SignalColumn $w={108}>
                      <ColumnHead $pad={15}>Value</ColumnHead>
                      <SignalRows>
                        {waves.map(w => (
                          <ValueRow key={w.name}>{w.value}</ValueRow>
                        ))}
                      </SignalRows>
                      <BlackFill />
                      <Horizontal from={6} len={34} />
                    </SignalColumn>
                  </SignalColumns>
                </SignalBlock>
                <WaveArea>
                  <WaveTop>
                    <Waveform />
                    <Vertical from={4} len={287} />
                  </WaveTop>
                  <Horizontal from={650} len={36} h={15} />
                </WaveArea>
              </WaveBody>
            </WavePanel>
          </Workspace>

          <ConsolePanel>
            <TabStrip>
              <Tab $w={109} $active>Tcl Console<CloseX /></Tab>
              <Tab $w={81} $sep>Messages</Tab>
              <Tab $w={43} $sep>Log</Tab>
              <PanelControls />
            </TabStrip>
            <Toolbar $pull={1}>
              <ToolSlot><Search /></ToolSlot>
              <ToolSlot><CollapseAll /></ToolSlot>
              <ToolSlot><ExpandAll /></ToolSlot>
              <ToolSlot><PauseNavy /></ToolSlot>
              <ToolSlot><DocIcon /></ToolSlot>
              <ToolSlot><ColumnsIcon /></ToolSlot>
              <ToolSlot><Trash /></ToolSlot>
            </Toolbar>
            <ConsoleBody>
              <ConsoleTop>
                <FoldGutter><FoldMark /></FoldGutter>
                <ConsoleLines>
                  <ConsoleLine>launch_simulation: Time (s): cpu = 00:00:08 ; elapsed = 00:00:26 . Memory (MB): peak = 1104.051 ; gain = 14.305</ConsoleLine>
                  <ConsoleLine $cmd>update_compile_order -fileset sim_1</ConsoleLine>
                  <ConsoleLine $cmd>update_compile_order -fileset sources_1</ConsoleLine>
                </ConsoleLines>
                <Vertical from={7} len={34} />
                <MarkColumn>
                  <Mark $top={14} />
                  <Mark $top={2} />
                  <Mark $top={18} />
                  <Mark $top={20} />
                </MarkColumn>
              </ConsoleTop>
              <Horizontal from={3} len={1054} h={13} inset={26} end={24} />
              <ConsoleInput placeholder="Type a Tcl command here" />
            </ConsoleBody>
          </ConsolePanel>
        </Main>
      </Body>
      <StatusBar>Sim Time: 716 ns</StatusBar>
    </Page>
  );
}
